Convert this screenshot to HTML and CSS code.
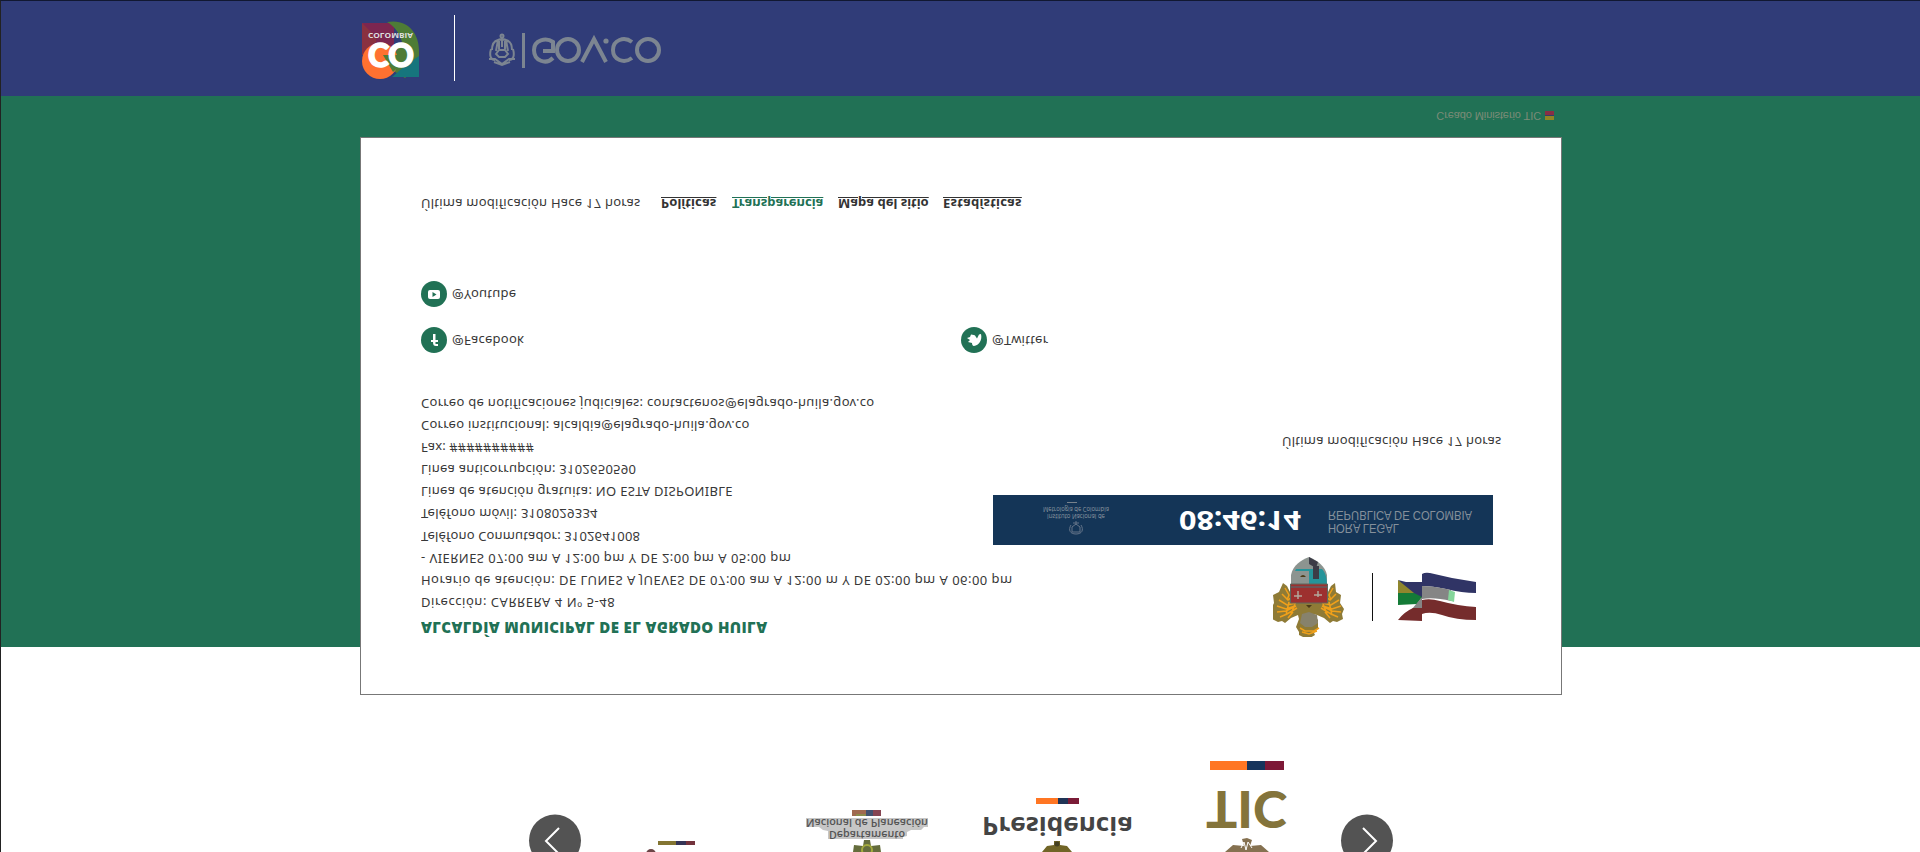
FILE: index.html
```
<!DOCTYPE html>
<html lang="es">
<head>
<meta charset="utf-8">
<title>Alcaldía Municipal de El Agrado Huila</title>
<link rel="stylesheet" href="styles.css">
</head>
<body>
<header class="topbar">
  <svg class="brand" width="58" height="58" viewBox="0 0 58 58">
    <path fill="#7c2650" d="M0 1h32v32H0z"/>
    <path fill="#8a3140" d="M0 1l14 14v18H0z"/>
    <path fill="#4e7c36" d="M25 0C46-4 57 12 57 28v16L43 56 25 45l15-25C37 10 32 4 25 0z"/>
    <path fill="#16757d" d="M57 34v21H30l14-12z"/>
    <circle cx="18" cy="39" r="18" fill="#ff7130"/>
    <path fill="#4e7c36" d="M21 33h29L31 50z"/>
    <g transform="scale(1,-1)">
      <text class="logo-co" x="6" y="-21" textLength="46" lengthAdjust="spacingAndGlyphs">CO</text>
      <text class="logo-small" x="6" y="-10.500" textLength="45" lengthAdjust="spacingAndGlyphs">COLOMBIA</text>
    </g>
  </svg>
  <span class="divider"></span>
  <svg class="gov" width="176" height="40" viewBox="0 0 176 40">
    <g fill="none" stroke="#7c8591" stroke-width="2">
      <circle cx="14" cy="7" r="1.500"/>
      <path d="M14 8v10M8 13c3-4 9-4 12 0M4 21c0-5 2-9 6-10l-2 11M24 21c0-5-2-9-6-10l2 11M11 12v8M17 12v8M3 20c-2 7 0 11 4 11M25 20c2 7 0 11-4 11M8 25l3-4h6l3 4-3 3h-6zM1 30h6l7 5 7-5h6M6 33l8 3 8-3"/>
    </g>
    <path fill="#7c8591" d="M34 4h3v35h-3z"/>
    <g fill="none" stroke="#7c8591" stroke-width="4">
      <path d="M55 22h10V13C58 8 46 11 46 21c0 11 12 15 19 8"/>
      <circle cx="80" cy="21" r="11"/><path d="M94 33l12-23 12 23"/>
      <path d="M144 13c-8-6-19-2-19 8s11 14 19 8"/><circle cx="160" cy="21" r="11"/>
    </g>
    <circle cx="118" cy="12" r="2.600" fill="#7c8591"/>
  </svg>
</header>
<main class="stage">
  <div class="credit"><span class="flip">Creado Ministerio TIC</span><i class="mini-flag"></i></div>
  <section class="card">
    <nav class="links">
      <span class="flip updated">Última modificación Hace 17 horas</span>
      <a class="flip l1">Políticas</a><a class="flip l2">Transparencia</a><a class="flip l3">Mapa del sitio</a><a class="flip l4">Estadísticas</a>
    </nav>
    <div class="social">
      <div class="handle"><svg width="26" height="26" viewBox="0 0 26 26"><circle cx="13" cy="13" r="13"/><rect x="7" y="9" width="12" height="9" rx="2" fill="#fff"/><path d="M11.500 11v5l4-2.500z"/></svg><span class="flip yt">@Youtube</span></div>
      <div></div>
      <div class="handle"><svg width="26" height="26" viewBox="0 0 26 26"><circle cx="13" cy="13" r="13"/><path d="M12 7h2.500v6H17v2h-2.500v2H17v2h-2c-2 0-3-1-3-4h-2v-2h2z" fill="#fff"/></svg><span class="flip fb">@Facebook</span></div>
      <div class="handle"><svg width="26" height="26" viewBox="0 0 26 26"><circle cx="13" cy="13" r="13"/><path d="M10 7.500c2 0 4 1 4 1l2 3 2-4 2-0.500c1.500 6-2 11.500-7 12-1.500 0-2-1.500-2-3l-4-1 2-2-3-2 3-1z" fill="#fff"/></svg><span class="flip tw">@Twitter</span></div>
    </div>
    <div class="info">
      <div class="contact">
        <p class="flip c1">Correo de notificaciones judiciales: contactenos@elagrado-huila.gov.co</p>
        <p class="flip c2">Correo institucional: alcaldia@elagrado-huila.gov.co</p>
        <p class="flip c3">Fax: ##########</p>
        <p class="flip c2">Linea anticorrupción: 3102650590</p>
        <p class="flip c1">Linea de atención gratuita: NO ESTA DISPONIBLE</p>
        <p class="flip c2">Teléfono móvil: 3108029334</p>
        <p class="flip c4">Teléfono Conmutador: 3102641008</p>
        <p class="flip c5">- VIERNES 07:00 am A 12:00 pm Y DE 2:00 pm A 05:00 pm</p>
        <p class="flip c5">Horario de atención: DE LUNES A JUEVES DE 07:00 am A 12:00 m Y DE 02:00 pm A 06:00 pm</p>
        <p class="flip c6">Dirección: CARRERA 4 Nº 5-48</p>
        <h2 class="flip">ALCALDÍA MUNICIPAL DE EL AGRADO HUILA</h2>
      </div>
      <div class="side">
        <span class="flip updated">Última modificación Hace 17 horas</span>
        <div class="clock">
          <svg width="500" height="50" viewBox="0 0 500 50">
            <path d="M74 7.500h10" stroke="#77828c"/>
            <g transform="scale(1,-1)">
              <text class="inm" x="50" y="-11.500" textLength="66" lengthAdjust="spacingAndGlyphs">Metrología de Colombia</text>
              <text class="inm" x="54" y="-18.500" textLength="58" lengthAdjust="spacingAndGlyphs">Instituto Nacional de</text>
              <text class="time" x="186" y="-16" textLength="122" lengthAdjust="spacingAndGlyphs">08:46:14</text>
              <text class="legal" x="335" y="-16" textLength="144" lengthAdjust="spacingAndGlyphs">REPÚBLICA DE COLOMBIA</text>
              <text class="legal" x="335" y="-29" textLength="71" lengthAdjust="spacingAndGlyphs">HORA LEGAL</text>
            </g>
            <g fill="none" stroke="#647489"><path d="M83 26v4M79 32l4-3 4 3v5h-8zM78 30c-3 5-1 9 5 9s8-4 5-9M80 28h6"/></g>
          </svg>
        </div>
        <div class="emblems">
          <svg width="72" height="80" viewBox="0 0 72 80">
            <path fill="#8f7b36" d="M10 26l4 3 3 6h38l3-6 4-3 1 9 5 3-1 8 4 6-2 5 1 5-6 3-4-1-3 2-6-5-7-3-4-1 5 6v8l-4 5 1 2-5 3h-5l-6-3 0-3-3-5 3-8-1-4-7 3-6 5-3-2-4 1-6-3 1-5-2-5 3-6-1-8 6-3z"/>
            <g fill="none" stroke="#f0a01a" stroke-width="1.500">
              <path d="M9 37l6 6 4-3M6 43l8 5 9-2M4 49l9 3 9-3M4 55l9-1 10-5M7 60l7-3 10-6M15 61l5-6M12 31l4 7-2 5M16 45l-3 13M22 47l-4 10"/>
              <path d="M63 37l-6 6-4-3M66 43l-8 5-9-2M68 49l-9 3-9-3M68 55l-9-1-10-5M65 60l-7-3-10-6M57 61l-5-6M60 31l-4 7 2 5M56 45l3 13M50 47l4 10"/>
              <path d="M27 71l5 3h9l5-3M29 75l7 2 8-3"/>
            </g>
            <path fill="#87826c" d="M29 57l7-2 8 3 1 8-6 4h-7l-5-4z"/>
            <path fill="#8c9490" d="M18 28V18C20 8 28 3 36 0c9 4 16 9 18 18v10z"/>
            <path fill="#25949a" d="M36 12h13c3 3 5 8 5 16H36zM23 12h13v2H22z"/>
            <path fill="#3c3c47" d="M36 0l9 5-2 6-7-4zM40 9h6v13h-6z"/>
            <path fill="#9d302f" stroke="#5e675e" d="M17.500 27h37v19h-37z"/>
            <path stroke="#b3a79c" fill="none" stroke-width="1.500" d="M21 39h8M25 34v8M41 38h8M45 34v6"/>
            <path stroke="#47727a" fill="none" d="M18 30h36"/>
            <path fill="#4b3b18" d="M27 20q3-4 6 0zM33 48h6l-3 3z"/>
          </svg>
          <span class="rule"></span>
          <svg width="78" height="50" viewBox="0 0 78 50">
            <path fill="#303465" d="M0 8l8 2h16v16H14zM24 2q3-2 8-1l22 5 24 4v11q-14 0-30-4-14-3-24-3z"/>
            <path fill="#8f862d" d="M0 8l16 13H0z"/><path fill="#147b37" d="M0 21h16l8 4-5 7-19 1z"/>
            <path fill="#858585" d="M24 14q12 0 29 4v11q-17-4-29-2z"/>
            <path fill="#85d69b" d="M51 18l6 2-1 10-6-2z"/>
            <path fill="#858585" d="M24 25v12H14z"/>
            <path fill="#752c2c" d="M24 28q8-2 18 1 18 5 36 6v13q-20 0-34-5-12-4-20-1zM15 36h9v13l-24-1q6-8 15-12z"/>
          </svg>
        </div>
      </div>
    </div>
  </section>
</main>
<footer class="carousel">
  <svg width="880" height="100" viewBox="0 0 880 100">
    <circle cx="35" cy="88.500" r="26" fill="#535353"/><path d="M39 76L26 89l13 13" fill="none" stroke="#fff" stroke-width="2"/>
    <circle cx="847" cy="88.500" r="26" fill="#535353"/><path d="M843 76l13 13-13 13" fill="none" stroke="#fff" stroke-width="2"/>
    <path fill="#837532" d="M138 89h18v4h-18z"/><path fill="#343456" d="M156 89h10v4h-10z"/><path fill="#73323c" d="M166 89h9v4h-9z"/>
    <circle cx="131" cy="102" r="5" fill="#6d4547"/>
    <path fill="#a06a50" d="M332 58h14v6h-14z"/><path fill="#425270" d="M346 58h7v6h-7z"/><path fill="#864553" d="M353 58h8v6h-8z"/><path stroke="#79ad48" d="M336 63h10"/>
    <path fill="#c6c6c6" d="M286 66h122v9h-4l-3 3h-10l-4 2v4l-4 1v2h-75v-8l-5-1-4-3h-13z"/>
    <g transform="scale(1,-1)">
      <text class="dnp" x="286" y="-67" textLength="122" lengthAdjust="spacingAndGlyphs">Nacional de Planeación</text>
      <text class="dnp" x="309" y="-79" textLength="76" lengthAdjust="spacingAndGlyphs">Departamento</text>
      <text class="pres" x="462" y="-65" textLength="151" lengthAdjust="spacingAndGlyphs">Presidencia</text>
      <text class="tic" x="686" y="-39" textLength="81" lengthAdjust="spacingAndGlyphs">TIC</text>
    </g>
    <path fill="#656d3c" d="M344 88h6l1 6 9-1 1 7h-28l1-7 9 1z"/><circle cx="347" cy="98" r="5" fill="none" stroke="#a4aa3e" stroke-width="2"/>
    <path fill="#ff7623" d="M516 46h22v6h-22z"/><path fill="#203456" d="M538 46h10v6h-10z"/><path fill="#7a1b37" d="M548 46h11v6h-11z"/>
    <path fill="#716527" d="M534 89h6v4l7 1 5 6h-30l5-6 7-1z"/><circle cx="537" cy="92" r="2.500" fill="#454022"/>
    <path fill="#ff7623" d="M690 9h37v9h-37z"/><path fill="#16345c" d="M727 9h18v9h-18z"/><path fill="#7d1837" d="M745 9h19v9h-19z"/>
    <path fill="#857150" d="M722 87l5-1 5 2-2 6 11-1 8 7h-44l8-7 11 1z"/><path fill="none" stroke="#fff" d="M721 96l3-6 2 8 2-8 4 6"/>
  </svg>
</footer>
</body>
</html>
```
FILE: styles.css
```
* { box-sizing: border-box; }
html, body { height: 852px; overflow: hidden; }
body { margin: 0; font-family: "Noto Sans", sans-serif; font-size: 13px; color: #383838; background: #fff; border-top: 1px solid #111831; border-left: 1px solid #222; }
svg { display: block; }
.flip { display: block; transform: scaleY(-1); white-space: nowrap; }
.topbar { height: 95px; padding: 14px 0 0 361px; background: #303c78; display: flex; align-items: flex-start; }
.brand { margin-top: 7px; overflow: visible; }
.divider { width: 1px; height: 66px; margin-left: 34px; background: #fff; }
.gov { margin: 14px 0 0 33px; }
.logo-co { font: 900 32px Lato, sans-serif; fill: #fff; stroke: #fff; stroke-width: 1.5px; }
.logo-small { font: 700 7px "Open Sans", sans-serif; fill: #ddd; }
.stage { height: 551px; background: #217155; padding: 0 358px 0 359px; }
.credit { height: 41px; display: flex; justify-content: flex-end; align-items: flex-start; padding: 12px 8px 0 0; gap: 4px; color: #7d8c78; font: 11px/16px "Liberation Sans", sans-serif; letter-spacing: -.1px; }
.mini-flag { width: 9px; height: 9px; margin-top: 3px; background: linear-gradient(#872f45 40%, #323e69 40% 60%, #8f8524 60%); }
.card { width: 1202px; height: 558px; border: 1px solid #777; background: #fff; padding: 52px 59px 0 60px; }
.links { height: 28px; display: flex; line-height: 28px; }
.updated { letter-spacing: .23px; }
.links .updated { width: 240px; }
.links a { font-weight: 700; text-decoration: underline; color: #333; }
.l1 { width: 71px; letter-spacing: .1px; }
.l2 { width: 106px; }
.l3 { width: 105px; }
.l4 { letter-spacing: .2px; }
.links .l2 { color: #217155; }
.social { margin-top: 63px; display: grid; grid-template-columns: 540px 1fr; row-gap: 20px; }
.handle { display: flex; align-items: center; height: 26px; gap: 5px; fill: #217155; letter-spacing: .25px; }
.handle .flip { padding-bottom: 1px; }
.handle .flip { margin-top: 1px; }
.info { margin-top: 40px; display: flex; }
.contact { width: 572px; }
.contact p { margin: 0; line-height: 22.100px; width: max-content; }
.contact .c1 { letter-spacing: .3px; }
.contact .c2 { letter-spacing: .25px; }
.contact .c3 { letter-spacing: .08px; }
.contact .c4 { letter-spacing: .14px; }
.contact .c5 { letter-spacing: .46px; }
.contact .c6 { letter-spacing: .54px; }
.contact h2 { margin: 2px 0 0; font: 800 15px/24px "Open Sans", sans-serif; letter-spacing: .36px; color: #217155; width: max-content; }
.side { width: 509px; display: flex; flex-direction: column; }
.side .updated { margin: 37px 0 0 289px; line-height: 24px; }
.clock { width: 500px; height: 50px; margin-top: 41px; background: #143557; }
.inm { font: 6.500px "Open Sans", sans-serif; fill: #8b95a0; }
.time { font: 700 26px "Open Sans", sans-serif; fill: #fff; }
.legal { font: 12px "Liberation Sans", sans-serif; fill: #85909b; }
.emblems { display: flex; padding: 12px 0 0 280px; }
.rule { width: 1px; height: 48px; margin: 16px 25px 0 27px; background: #111; }
.emblems svg:last-child { margin-top: 15px; }
.carousel { padding: 105px 0 0 519px; }
.dnp { font: 600 10.500px "Open Sans", sans-serif; fill: #555; }
.pres { font: 700 25px "Open Sans", sans-serif; fill: #444; }
.tic { font: 900 52px Lato, sans-serif; fill: #84743b; }
```
